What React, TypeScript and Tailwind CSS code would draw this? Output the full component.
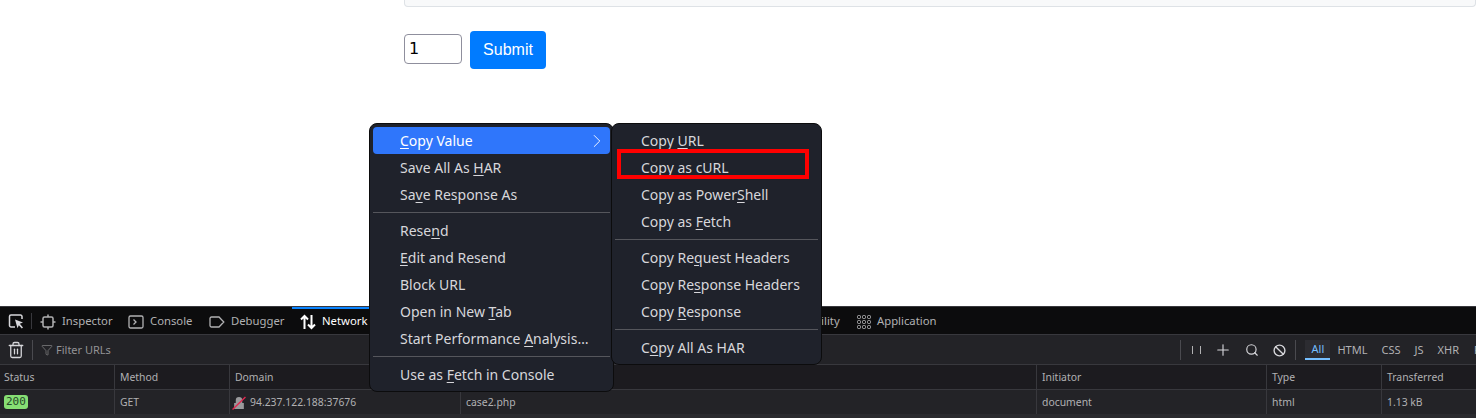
import React from "react";
import { ChevronRight, Filter, Plus, Search, Ban, Trash2 } from "lucide-react";

type MenuEntry = { before: string; key?: string; after?: string } | "sep";

const mainMenu: MenuEntry[] = [
  { before: "", key: "C", after: "opy Value" },
  { before: "Save All As ", key: "H", after: "AR" },
  { before: "Sa", key: "v", after: "e Response As" },
  "sep",
  { before: "Rese", key: "n", after: "d" },
  { before: "", key: "E", after: "dit and Resend" },
  { before: "Block URL" },
  { before: "Open in New ", key: "T", after: "ab" },
  { before: "Start Performance ", key: "A", after: "nalysis…" },
  "sep",
  { before: "Use as ", key: "F", after: "etch in Console" },
];

const subMenu: MenuEntry[] = [
  { before: "Copy ", key: "U", after: "RL" },
  { before: "", key: "C", after: "opy as cURL" },
  { before: "Copy as Power", key: "S", after: "hell" },
  { before: "Copy as ", key: "F", after: "etch" },
  "sep",
  { before: "Copy Re", key: "q", after: "uest Headers" },
  { before: "Copy Re", key: "s", after: "ponse Headers" },
  { before: "Copy ", key: "R", after: "esponse" },
  "sep",
  { before: "C", key: "o", after: "py All As HAR" },
];

const Menu: React.FC<{ items: MenuEntry[]; className: string; textPad: string; highlightFirst?: boolean }> = ({
  items,
  className,
  textPad,
  highlightFirst,
}) => (
  <div className={`absolute rounded-lg border border-[#0c0c0d] bg-[#1f222b] p-[3px] text-[14px] text-[#d7d7db] ${className}`}>
    {items.map((item, i) =>
      item === "sep" ? (
        <div key={i} className="my-1 h-px bg-[#55565c]" />
      ) : (
        <div
          key={i}
          className={`flex h-[27px] items-center rounded ${textPad} ${
            highlightFirst && i === 0 ? "bg-[#2f76fb] text-white" : ""
          }`}
        >
          <span className="whitespace-pre">
            {item.before}
            {item.key && <span className="underline underline-offset-2">{item.key}</span>}
            {item.after}
          </span>
          {highlightFirst && i === 0 && <ChevronRight className="ml-auto mr-[2px] h-[22px] w-[22px]" strokeWidth={1} />}
        </div>
      )
    )}
  </div>
);

const PickIcon = () => (
  <svg width="16" height="16" viewBox="0 0 16 16" fill="none" stroke="#d7d7db" strokeWidth="1.5">
    <path d="M7 14H3a1.5 1.5 0 0 1-1.5-1.5v-9A1.5 1.5 0 0 1 3 2h9.500A1.500 1.500 0 0 1 14 3.500V6" />
    <path d="M7 6.500l8 3-3.200 1.300L15 14.500 13.800 15.500l-3-3.300L9.500 15.200z" fill="#d7d7db" stroke="none" />
  </svg>
);

const InspectorIcon = () => (
  <svg width="16" height="16" viewBox="0 0 16 16" fill="none" stroke="#b1b1b3" strokeWidth="1.500">
    <rect x="3" y="3" width="10" height="10" rx="1.500" />
    <path d="M8 0.500V3M8 13v2.500M0.500 8H3M13 8h2.500" />
  </svg>
);

const ConsoleIcon = () => (
  <svg width="16" height="16" viewBox="0 0 16 16" fill="none" stroke="#b1b1b3" strokeWidth="1.300">
    <rect x="1" y="2" width="14" height="12" rx="1.500" />
    <path d="M5.500 5.500L8 8l-2.500 2.500" />
  </svg>
);

const DebuggerIcon = () => (
  <svg width="16" height="16" viewBox="0 0 16 16" fill="none" stroke="#b1b1b3" strokeWidth="1.300">
    <path d="M2.500 3h7.500l4.800 5-4.800 5H2.500A1.500 1.500 0 0 1 1 11.500v-7A1.500 1.500 0 0 1 2.500 3z" />
  </svg>
);

const NetworkIcon = () => (
  <svg width="16" height="16" viewBox="0 0 16 16" fill="none" stroke="#ffffff" strokeWidth="2">
    <path d="M4.500 15V2M1 5.500l3.500-3.500L8 5.500M11.500 1v13M8 10.500l3.500 3.500 3.500-3.500" />
  </svg>
);

const AppIcon = () => (
  <svg width="14" height="14" viewBox="0 0 14 14" fill="none" stroke="#b1b1b3" strokeWidth="1">
    {[2, 7, 12].map((y) =>
      [2, 7, 12].map((x) => <rect key={`${x}-${y}`} x={x - 1.500} y={y - 1.500} width="3" height="3" rx="1" />)
    )}
  </svg>
);

const Tab: React.FC<{ icon?: React.ReactNode; label: string; width: string; active?: boolean }> = ({
  icon,
  label,
  width,
  active,
}) => (
  <div
    className={`flex h-full shrink-0 items-center gap-[6px] border-t-2 pl-2 ${width} ${
      active ? "border-[#0a84ff] text-white" : "border-transparent text-[#b1b1b3]"
    }`}
  >
    {icon}
    <span>{label}</span>
  </div>
);

const gridCols = "grid grid-cols-[115px_115px_231px_576px_230px_115px_1fr]";
const headers = ["Status", "Method", "Domain", "", "Initiator", "Type", "Transferred"];

const App: React.FC = () => {
  return (
    <div className="relative h-[418px] w-[1476px] overflow-hidden bg-white font-['Noto_Sans',sans-serif]">
      {/* page content */}
      <div className="h-[306px] pl-[404px]">
        <div className="h-[7px] rounded-b border border-t-0 border-[#dee2e6] bg-[#f8f9fa]" />
        <div className="mt-6 flex items-start gap-2 font-['Liberation_Sans',sans-serif]">
          <div className="mt-[3px] flex h-[30px] w-[58px] items-center rounded-sm border border-[#8f8f9d] pl-1 font-['DejaVu_Sans',sans-serif] text-[16px] text-black">
            1
          </div>
          <button className="h-[38px] w-[76px] rounded bg-[#007bff] text-[16px] text-white">Submit</button>
        </div>
      </div>

      {/* devtools */}
      <div className="h-[112px] border-t border-[#38383d] bg-[#232327] text-[10.4px]">
        <div className="flex h-[28px] items-center border-b border-[#38383d] bg-[#0c0c0d] text-[11.3px]">
          <div className="flex w-[31px] justify-center">
            <PickIcon />
          </div>
          <div className="h-4 w-px bg-[#38383d]" />
          <div className="flex h-full">
            <Tab icon={<InspectorIcon />} label="Inspector" width="w-[88px]" />
            <Tab icon={<ConsoleIcon />} label="Console" width="w-[81px]" />
            <Tab icon={<DebuggerIcon />} label="Debugger" width="w-[91px]" />
            <Tab icon={<NetworkIcon />} label="Network" width="w-[78px]" active />
            <Tab label="" width="w-[398px]" />
            <Tab label="Accessibility" width="w-[81px]" />
            <Tab icon={<AppIcon />} label="Application" width="w-[100px]" />
          </div>
        </div>

        <div className="flex h-[30px] items-center border-b border-[#38383d] pt-px text-[11px] text-[#939395]">
          <Trash2 className="ml-[7px] h-[18px] w-[18px] text-[#d7d7db]" strokeWidth={1.700} />
          <div className="ml-[7px] h-5 w-px bg-[#4a4a4f]" />
          <Filter className="ml-2 h-3 w-3" strokeWidth={1.250} />
          <span className="ml-[3px]">Filter URLs</span>
          <div className="ml-auto flex items-center text-[#b1b1b3]">
            <div className="h-5 w-px bg-[#4a4a4f]" />
            <span className="ml-[11px] mr-[13px] flex gap-[7px]">
              <i className="h-2 w-px bg-[#b1b1b3]" />
              <i className="h-2 w-px bg-[#b1b1b3]" />
            </span>
            <Plus className="h-[18px] w-[18px] text-[#d7d7db]" strokeWidth={1.500} />
            <Search className="ml-[13px] h-[14px] w-[14px] text-[#d7d7db]" strokeWidth={2} />
            <Ban className="ml-[14px] h-[13px] w-[13px] text-[#d7d7db]" strokeWidth={2.500} />
            <div className="ml-[9px] h-5 w-px bg-[#4a4a4f]" />
            <span className="ml-[9px] flex h-[20px] w-[25px] items-center justify-center border-b-2 border-[#75bfff] bg-[#2c2c31] text-[#75bfff]">
              All
            </span>
            <span className="ml-[7px]">HTML</span>
            <span className="ml-[14px]">CSS</span>
            <span className="ml-[14px]">JS</span>
            <span className="ml-[14px]">XHR</span>
            <span className="ml-[15px] w-[2px] overflow-hidden">F</span>
          </div>
        </div>

        <div className={`${gridCols} h-[25px] border-b border-[#38383d] bg-[#1c1b1f] text-[#b1b1b3]`}>
          {headers.map((h, i) => (
            <div key={i} className={`flex items-center border-r border-[#38383d] pt-[2px] last:border-r-0 ${i === 0 ? "pl-1" : "pl-[5px]"}`}>
              {h}
            </div>
          ))}
        </div>

        <div className={`${gridCols} h-[24px] text-[#b1b1b3]`}>
          <div className="flex items-center border-r border-[#38383d] pl-1">
            <span className="rounded-[3px] bg-[#86de74] px-[2px] font-['DejaVu_Sans_Mono',monospace] text-[11px] leading-[14px] text-[#26482a]">
              200
            </span>
          </div>
          <div className="flex items-center border-r border-[#38383d] pl-[5px] pt-[2px]">GET</div>
          <div className="flex items-center gap-1 border-r border-[#38383d] pl-[2px] pt-[2px]">
            <svg width="14" height="14" viewBox="0 0 13 13">
              <path d="M2 6.500h9v5.500H2zM3.500 6.500V4a3 3 0 0 1 6 0v2.500" fill="#9a9a9c" />
              <path d="M0.500 12.500L12.500 1" stroke="#e22850" strokeWidth="1.300" />
            </svg>
            94.237.122.188:37676
          </div>
          <div className="flex items-center border-r border-[#38383d] pl-[5px] pt-[2px]">case2.php</div>
          <div className="flex items-center border-r border-[#38383d] pl-[5px] pt-[2px]">document</div>
          <div className="flex items-center border-r border-[#38383d] pl-[5px] pt-[2px]">html</div>
          <div className="flex items-center pl-[5px] pt-[2px]">1.13 kB</div>
        </div>
        <div className="h-[5px] bg-[#2a2a2e]" />
      </div>

      {/* context menus */}
      <Menu items={mainMenu} className="left-[369px] top-[123px] w-[245px]" textPad="pl-[27px]" highlightFirst />
      <Menu items={subMenu} className="left-[611px] top-[123px] w-[211px]" textPad="pl-[26px]" />

      {/* annotation */}
      <div className="absolute left-[617px] top-[149px] h-[30px] w-[192px] border-4 border-[#ff0000]" />
    </div>
  );
};

export default App;
